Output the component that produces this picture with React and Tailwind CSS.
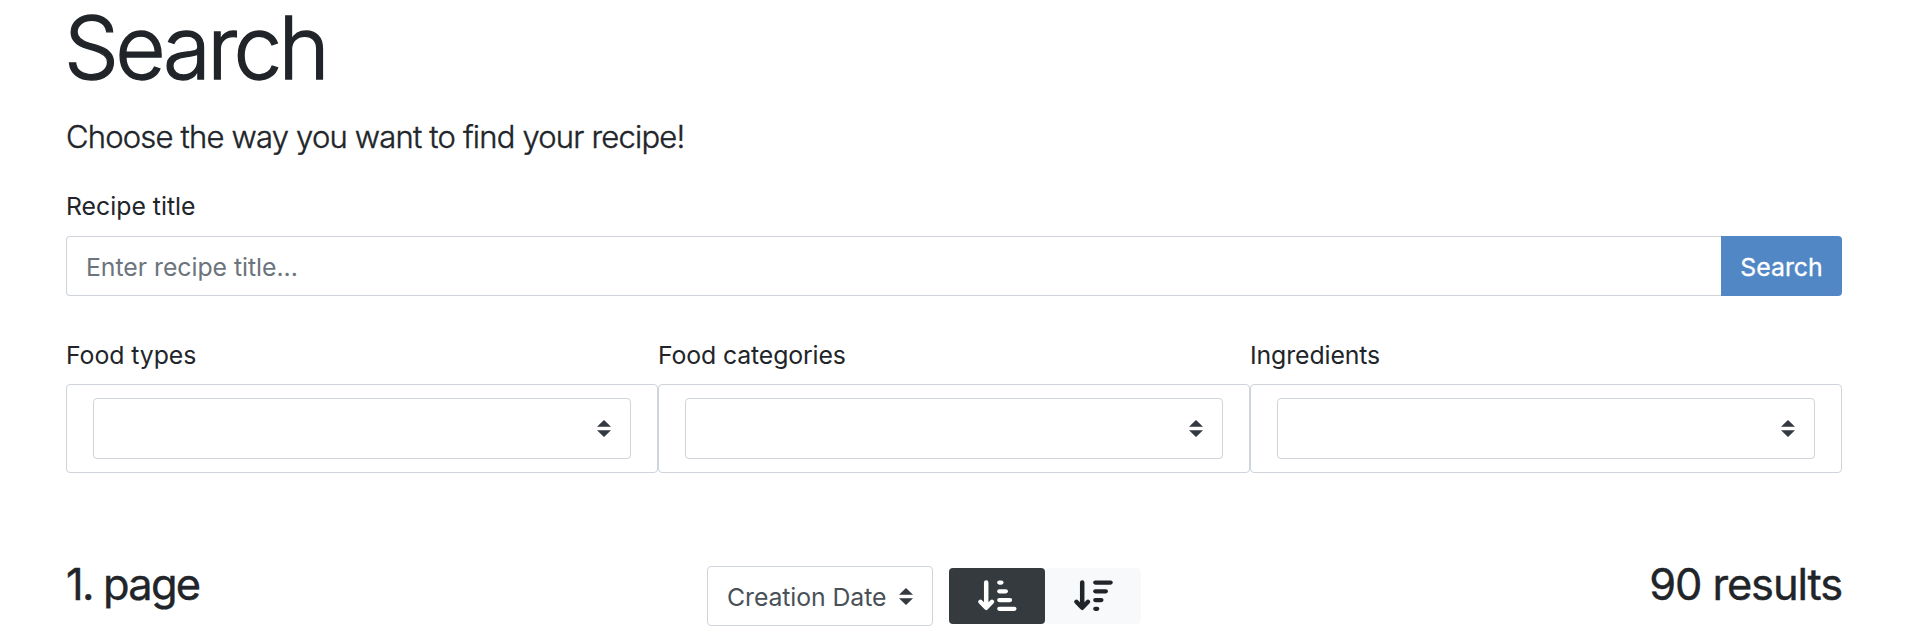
const filters = [
  { label: "Food types", tracking: "tracking-[-0.05px]" },
  { label: "Food categories", tracking: "tracking-[-0.12px]" },
  { label: "Ingredients", tracking: "tracking-[-0.1px]" },
];

function Caret() {
  return (
    <svg viewBox="0 0 4 5" preserveAspectRatio="none" className="h-[17px] w-[14px] shrink-0 fill-[#343a40]" aria-hidden="true">
      <path d="M2 0L0 2h4zm0 5L0 3h4z" />
    </svg>
  );
}

function SortIcon({ ends }) {
  return (
    <svg
      viewBox="0 0 40 34"
      className="h-[34px] w-10"
      fill="none"
      stroke="currentColor"
      strokeLinecap="round"
      strokeLinejoin="round"
      aria-hidden="true"
    >
      <path strokeWidth="4.5" d="M9.2 3.4V28.6M3.4 22.8l5.8 6 5.8-6" />
      {ends.map((end, i) => (
        <path key={i} strokeWidth="4.3" d={`M22.3 ${3.6 + i * 8.74}H${end}`} />
      ))}
    </svg>
  );
}

export default function App() {
  return (
    <div className="h-[640px] bg-white pr-[70px] pl-[66px] font-['Inter','Liberation_Sans',sans-serif] text-[24.8px] leading-[38px] text-[#212529]">
      <h1 className="-ml-[2px] text-[87px] leading-[95px] font-light tracking-[-3.6px] [-webkit-text-stroke:1.3px_#212529]">
        Search
      </h1>
      <p className="mt-[18px] text-[31px] leading-[48px] font-light tracking-[-0.81px] [-webkit-text-stroke:0.4px_#212529]">
        Choose the way you want to find your recipe!
      </p>

      <label className="mt-[26px] block">Recipe title</label>
      <div className="mt-[11px] flex h-[60px]">
        <input
          type="text"
          placeholder="Enter recipe title..."
          className="min-w-0 flex-1 rounded-l-[4px] border border-r-0 border-[#ced4da] bg-white pt-[2px] pl-[19px] tracking-[-0.03px] placeholder:text-[#6c757d] placeholder:opacity-100"
        />
        <button className="w-[121px] rounded-r-[4px] bg-[#5287c6] pt-[2px] text-white [-webkit-text-stroke:0.3px_#fff]">
          Search
        </button>
      </div>

      <div className="mt-10 grid grid-cols-3">
        {filters.map(({ label, tracking }) => (
          <div key={label}>
            <label className={`block ${tracking}`}>{label}</label>
            <div className="mt-[10px] h-[89px] rounded-[4px] border border-[#ced4da] px-[26px] py-[13px]">
              <div className="flex h-[61px] items-center justify-end rounded-[4px] border border-[#ced4da] pr-[19px]">
                <Caret />
              </div>
            </div>
          </div>
        ))}
      </div>

      <div className="mt-[84px] grid grid-cols-[641px_434px_1fr] items-start">
        <h2 className="text-[43.4px] leading-[54px] tracking-[-1.75px] [-webkit-text-stroke:0.4px_#212529]">1. page</h2>
        <div className="mt-[9px] flex items-center gap-4">
          <div className="flex h-[60px] w-[226px] items-center justify-between rounded-[4px] border border-[#ced4da] px-[19px] tracking-[-0.08px] whitespace-nowrap text-[#495057]">
            <span className="pt-[2px]">Creation Date</span>
            <Caret />
          </div>
          <div className="flex h-14">
            <button className="flex w-24 items-center justify-center rounded-[4px] bg-[#343a3e] text-white">
              <SortIcon ends={[24.4, 28.8, 33, 37.4]} />
            </button>
            <button className="flex w-24 items-center justify-center rounded-[4px] bg-[#f8f9fb]">
              <SortIcon ends={[37.6, 32.8, 28.4, 24.2]} />
            </button>
          </div>
        </div>
        <h2 className="text-right text-[43.4px] leading-[54px] tracking-[-1.1px] [-webkit-text-stroke:0.4px_#212529]">
          90 results
        </h2>
      </div>
    </div>
  );
}
